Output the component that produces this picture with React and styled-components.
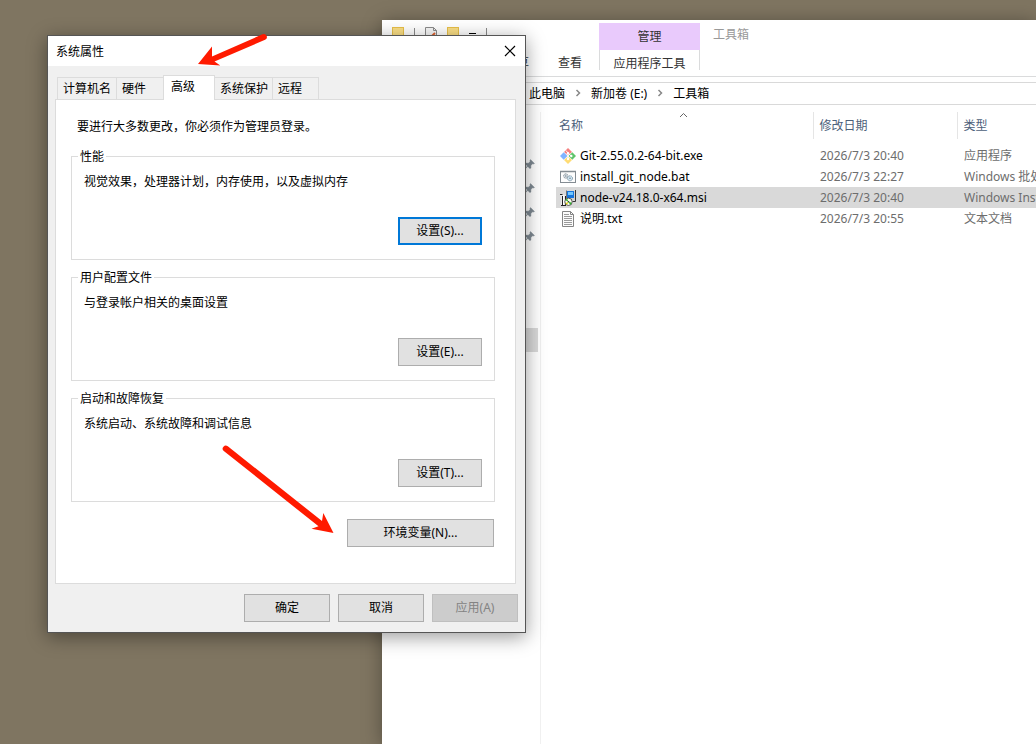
import React, { useState } from 'react';
import styled, { createGlobalStyle, css } from 'styled-components';

const GlobalStyle = createGlobalStyle`
    * {
        box-sizing: border-box;
    }
    body {
        margin: 0;
        overflow: hidden;
    }
    body, button, table {
        font-family: 'Noto Sans', 'Noto Sans CJK SC', sans-serif;
        font-size: 12px;
        line-height: 17px;
        color: #000;
    }
`;

const Desktop = styled.div`
    position: relative;
    height: 100vh;
    overflow: hidden;
    background: #7f7561;
`;

/* ---------- explorer ---------- */

const Explorer = styled.section`
    position: absolute;
    top: 20px;
    left: 382px;
    right: 0;
    bottom: 0;
    display: flex;
    flex-direction: column;
    background: #fff;
    box-shadow: 0 2px 18px rgba(0, 0, 0, 0.35);
`;

const Ribbon = styled.header`
    display: grid;
    grid-template-columns: 217px 101px 1fr;
    grid-template-rows: 30px 26px;
    border-bottom: 1px solid #dadbdc;
`;

const QuickAccess = styled.div`
    display: flex;
    align-items: center;
    gap: 10px;
    padding: 0 0 0 10px;
`;

const QuickDivider = styled.span`
    width: 1px;
    height: 14px;
    background: #8a8a8a;
`;

const ContextTitle = styled.div`
    margin-top: 3px;
    padding-top: 5px;
    background: #e9cafc;
    color: #333;
    text-align: center;
`;

const WindowTitle = styled.div`
    padding: 6px 13px;
    color: #999;
`;

const RibbonTabs = styled.nav`
    display: flex;
    justify-content: flex-end;
    align-items: center;
    gap: 29px;
    padding: 0 17px 2px 0;
`;

const RibbonTab = styled.button`
    padding: 0;
    border: 0;
    background: none;
    color: #333;
`;

const ContextTab = styled(RibbonTab)`
    height: 20px;
    padding-top: 5px;
    border: solid #dadbdc;
    border-width: 0 1px;
`;

const AddressBar = styled.nav`
    display: flex;
    align-items: center;
    gap: 10px;
    height: 23px;
    margin: 5px 0 0 90px;
    padding: 0 0 1px 56px;
    border: 1px solid #d9d9d9;
    border-right: 0;
`;

const Crumb = styled.a`
    color: #000;
    text-decoration: none;
    white-space: nowrap;
`;

const ExplorerBody = styled.div`
    display: grid;
    grid-template-columns: 159px 1fr;
    flex: 1;
    min-height: 0;
    margin-top: 7px;
`;

const NavPane = styled.aside`
    display: flex;
    flex-direction: column;
    padding: 40px 2px 0 0;
    border-right: 1px solid #f0f0f0;
`;

const NavRow = styled.div`
    display: flex;
    align-items: center;
    justify-content: flex-end;
    height: 24px;
    padding-right: 3px;
    background: ${(props) => (props.$selected ? '#d9d9d9' : 'transparent')};
`;

const NavSpace = styled.div`
    height: 80px;
`;

const FileArea = styled.main`
    min-width: 0;
    overflow: hidden;
    padding-left: 15px;
`;

const FileTable = styled.table`
    width: 100%;
    table-layout: fixed;
    border-collapse: collapse;
    white-space: nowrap;

    tbody::before {
        content: '';
        display: block;
        height: 6px;
    }
`;

const HeadCell = styled.th`
    position: relative;
    width: ${(props) => props.$width};
    height: 27px;
    padding: 0 0 0 ${(props) => (props.$first ? '3px' : '6px')};
    border-left: ${(props) => (props.$first ? '0' : '1px solid #e5e5e5')};
    color: #4c607a;
    font-weight: 400;
    text-align: left;
`;

const SortMark = styled.svg`
    position: absolute;
    top: 0;
    left: calc(50% - 5px);
`;

const FileRow = styled.tr`
    height: 21px;
    background: ${(props) => (props.$selected ? '#d9d9d9' : 'transparent')};
`;

const Cell = styled.td`
    padding: 0 0 0 7px;
    color: #6d6d6d;
`;

const NameCell = styled(Cell)`
    padding-left: 4px;
    color: #000;
`;

const FileName = styled.span`
    display: flex;
    align-items: center;
    gap: 4px;
`;

/* ---------- dialog ---------- */

const Dialog = styled.section`
    position: absolute;
    top: 35px;
    left: 47px;
    width: 479px;
    border: 1px solid #555;
    background: #f0f0f0;
    box-shadow: 0 4px 18px rgba(0, 0, 0, 0.4);
`;

const TitleBar = styled.header`
    display: flex;
    align-items: center;
    justify-content: space-between;
    height: 30px;
    padding: 0 4px 0 8px;
    background: #fff;
`;

const Title = styled.h1`
    margin: 0;
    font-size: 12px;
    font-weight: 400;
`;

const CloseButton = styled.button`
    display: flex;
    padding: 5px;
    border: 0;
    background: none;
`;

const DialogBody = styled.div`
    padding: 9px 9px 0 7px;
`;

const TabStrip = styled.div`
    display: flex;
    align-items: flex-end;
    padding-left: 2px;
`;

const Tab = styled.button`
    width: ${(props) => props.$width}px;
    height: 22px;
    margin-right: -1px;
    padding: 0 0 0 5px;
    border: 1px solid #dcdcdc;
    border-bottom: 0;
    background: #f0f0f0;
    text-align: left;
    white-space: nowrap;

    ${(props) =>
        props.$active &&
        css`
            z-index: 1;
            height: 25px;
            margin-bottom: -1px;
            padding: 0 0 3px 7px;
            background: #fff;
        `}
`;

const Panel = styled.div`
    display: flex;
    flex-direction: column;
    padding: 18px 20px 36px 15px;
    border: 1px solid #dcdcdc;
    background: #fff;
`;

const Notice = styled.p`
    margin: 0 0 13px;
    padding-left: 6px;
`;

const Groups = styled.div`
    display: flex;
    flex-direction: column;
    gap: 9px;
    margin-bottom: 17px;
`;

const Group = styled.fieldset`
    min-width: 0;
    margin: 0;
    padding: 8px 12px 14px;
    border: 1px solid #dcdcdc;
`;

const Legend = styled.legend`
    margin-left: -6px;
    padding: 0 2px;
`;

const GroupText = styled.p`
    margin: 0 0 27px;
`;

const Button = styled.button`
    display: block;
    width: ${(props) => props.$width || 86}px;
    height: 28px;
    padding: 0 0 2px;
    border: 1px solid #adadad;
    background: #e1e1e1;

    ${(props) =>
        props.$primary &&
        css`
            border: 2px solid #0078d7;
        `}

    &:disabled {
        border-color: #bfbfbf;
        background: #ccc;
        color: #838383;
    }
`;

const GroupButton = styled(Button)`
    margin-left: auto;
`;

const PanelButton = styled(Button)`
    align-self: flex-end;
    margin-right: 1px;
`;

const Footer = styled.footer`
    display: flex;
    justify-content: flex-end;
    gap: 8px;
    padding: 10px 7px;
`;

const Arrows = styled.svg`
    position: absolute;
    inset: 0;
    width: 100%;
    height: 100%;
    pointer-events: none;
`;

/* ---------- icons ---------- */

const FolderIcon = () => (
    <svg width="12" height="16" viewBox="0 0 12 16">
        <rect x="0.5" y="0.5" width="11" height="15" fill="#fbdf86" stroke="#e8c04a" />
    </svg>
);

const DocIcon = () => (
    <svg width="12" height="16" viewBox="0 0 12 16">
        <path d="M.5 .5h8l3 3v12H.5z" fill="#f7f7f7" stroke="#8b8b8b" />
        <path d="M8.500 .5v3h3" fill="none" stroke="#8b8b8b" />
        <path d="M5 11l5-5" stroke="#e0602c" strokeWidth="2" />
    </svg>
);

const ChevronIcon = () => (
    <svg width="6" height="8" viewBox="0 0 6 8">
        <path d="M1.500 1l3 3-3 3" fill="none" stroke="#888" strokeWidth="1.500" />
    </svg>
);

const PinIcon = () => (
    <svg width="11" height="11" viewBox="0 0 11 11">
        <path d="M6.500 .5l4 4-1.200 .6-.8-.3-1.700 1.900.2 2.100-1 .9L3.800 7.500.5 10.500l-.2-.3L3.300 7 1.200 5l.9-1 2.200.2L6.200 2.500l-.3-.8z" fill="#7f8a93" stroke="#7f8a93" strokeWidth=".4" />
    </svg>
);

const GitIcon = () => (
    <svg width="16" height="16" viewBox="0 0 16 16">
        <path d="M8 0l4 4-4 3.600L4 4z" fill="#f58080" />
        <path d="M3.700 4.300L7.500 8l-3.800 3.700L0 8z" fill="#80b3ff" />
        <path d="M12.300 4.300L16 8l-3.700 3.700L8.500 8z" fill="#5fc46a" />
        <path d="M8 8.400l4 3.600-4 4-4-4z" fill="#ffdc73" />
        <path d="M6 2.500L8 5v6M8 5l3.200 3" fill="none" stroke="#fff" />
        <circle cx="8" cy="5.200" r="1.200" fill="#fff" />
        <circle cx="8" cy="11" r="1.200" fill="#fff" />
        <circle cx="11.300" cy="8" r="1.200" fill="#fff" />
    </svg>
);

const BatIcon = () => (
    <svg width="16" height="16" viewBox="0 0 16 16">
        <rect x="0.500" y="2.500" width="15" height="11" fill="#fdfdfd" stroke="#848c93" />
        <path d="M0 2.500h16" stroke="#848c93" strokeWidth="1.500" />
        <circle cx="5.800" cy="7" r="2.200" fill="#d9e1e7" stroke="#8d979f" strokeDasharray="1.500 .5" />
        <circle cx="10" cy="9.300" r="2.500" fill="#d4eaf6" stroke="#8499a8" strokeDasharray="1.500 .5" />
        <circle cx="5.800" cy="7" r=".7" fill="#75818a" />
        <circle cx="10" cy="9.300" r=".8" fill="#75818a" />
    </svg>
);

const MsiIcon = () => (
    <svg width="16" height="16" viewBox="0 0 16 16">
        <path d="M0 4h3l1 1h3v11H1V6H0z" fill="#e8e8e8" />
        <path d="M0 4.500h2.500M2.500 6v9M5.500 6v9M1 15.500h5" fill="none" stroke="#222" />
        <path d="M3.500 5v10" stroke="#fff" />
        <path d="M6 1h9v9H6z" fill="#cfcfcf" />
        <path d="M7 1h7v7H7z" fill="#1674dc" />
        <path d="M8 2h5v3H8z" fill="#72c7ff" />
        <path d="M15.500 0v11.500h-3" fill="none" stroke="#333" />
        <path d="M6.500 .5V8" stroke="#777" />
        <circle cx="8.500" cy="11.800" r="3.700" fill="#f8f8ec" stroke="#333" strokeWidth=".8" />
        <path d="M8.500 11.800l-3-1.500 1.500-1.800zM8.500 11.800l3.200 1-1.500 2.200z" fill="#2bb62b" />
        <path d="M8.500 11.800l-3 1.500 1.500 1.500z" fill="#e5d400" />
        <circle cx="8.500" cy="11.800" r=".8" fill="#333" />
    </svg>
);

const TextIcon = () => (
    <svg width="16" height="16" viewBox="0 0 16 16">
        <path d="M2.500 .5h8l3 3v12h-11z" fill="#fcfcfc" stroke="#858585" />
        <path d="M10.500 .5v3h3" fill="none" stroke="#858585" />
        <path d="M4 3.500h5M4 5.500h8M4 7.500h8M4 9.500h8M4 11.500h8M4 13.500h8" stroke="#9b9b9b" />
    </svg>
);

/* ---------- data ---------- */

const files = [
    { name: 'Git-2.55.0.2-64-bit.exe', date: '2026/7/3 20:40', type: '应用程序', icon: <GitIcon /> },
    { name: 'install_git_node.bat', date: '2026/7/3 22:27', type: 'Windows 批处理文件', icon: <BatIcon /> },
    { name: 'node-v24.18.0-x64.msi', date: '2026/7/3 20:40', type: 'Windows Installer 程序包', icon: <MsiIcon /> },
    { name: '说明.txt', date: '2026/7/3 20:55', type: '文本文档', icon: <TextIcon /> },
];

const tabs = [
    { label: '计算机名', width: 60 },
    { label: '硬件', width: 48 },
    { label: '高级', width: 52 },
    { label: '系统保护', width: 59 },
    { label: '远程', width: 47 },
];

const groups = [
    { title: '性能', text: '视觉效果，处理器计划，内存使用，以及虚拟内存', button: '设置(S)...', primary: true },
    { title: '用户配置文件', text: '与登录帐户相关的桌面设置', button: '设置(E)...' },
    { title: '启动和故障恢复', text: '系统启动、系统故障和调试信息', button: '设置(T)...' },
];

const ExplorerWindow = () => {
    const [selected, setSelected] = useState(2);

    return (
        <Explorer>
            <Ribbon>
                <QuickAccess>
                    <FolderIcon />
                    <QuickDivider />
                    <DocIcon />
                    <FolderIcon />
                    <svg width="7" height="8" viewBox="0 0 7 8">
                        <path d="M0 2.500h7" stroke="#000" />
                        <path d="M1 5h5L3.500 8z" fill="#333" />
                    </svg>
                    <QuickDivider />
                </QuickAccess>
                <ContextTitle>管理</ContextTitle>
                <WindowTitle>工具箱</WindowTitle>
                <RibbonTabs>
                    <RibbonTab>共享</RibbonTab>
                    <RibbonTab>查看</RibbonTab>
                </RibbonTabs>
                <ContextTab>应用程序工具</ContextTab>
            </Ribbon>
            <AddressBar>
                <Crumb href="#pc">此电脑</Crumb>
                <ChevronIcon />
                <Crumb href="#e">新加卷 (E:)</Crumb>
                <ChevronIcon />
                <Crumb href="#tools">工具箱</Crumb>
            </AddressBar>
            <ExplorerBody>
                <NavPane>
                    {[0, 1, 2, 3].map((item) => (
                        <NavRow key={item}>
                            <PinIcon />
                        </NavRow>
                    ))}
                    <NavSpace />
                    <NavRow $selected />
                </NavPane>
                <FileArea>
                    <FileTable>
                        <thead>
                            <tr>
                                <HeadCell $first $width="257px">
                                    名称
                                    <SortMark width="9" height="6" viewBox="0 0 9 6">
                                        <path d="M1 5l3.500-3.500L8 5" fill="none" stroke="#666" />
                                    </SortMark>
                                </HeadCell>
                                <HeadCell $width="144px">修改日期</HeadCell>
                                <HeadCell $width="auto">类型</HeadCell>
                            </tr>
                        </thead>
                        <tbody>
                            {files.map((file, index) => (
                                <FileRow key={file.name} $selected={index === selected} onClick={() => setSelected(index)}>
                                    <NameCell>
                                        <FileName>
                                            {file.icon}
                                            {file.name}
                                        </FileName>
                                    </NameCell>
                                    <Cell>{file.date}</Cell>
                                    <Cell>{file.type}</Cell>
                                </FileRow>
                            ))}
                        </tbody>
                    </FileTable>
                </FileArea>
            </ExplorerBody>
        </Explorer>
    );
};

const PropertiesDialog = () => {
    const [active, setActive] = useState(2);

    return (
        <Dialog role="dialog" aria-labelledby="dialog-title">
            <TitleBar>
                <Title id="dialog-title">系统属性</Title>
                <CloseButton aria-label="关闭">
                    <svg width="12" height="12" viewBox="0 0 12 12">
                        <path d="M1 1l10 10M11 1L1 11" stroke="#000" strokeWidth="1.200" />
                    </svg>
                </CloseButton>
            </TitleBar>
            <DialogBody>
                <TabStrip role="tablist">
                    {tabs.map((tab, index) => (
                        <Tab
                            key={tab.label}
                            role="tab"
                            aria-selected={index === active}
                            $width={tab.width}
                            $active={index === active}
                            onClick={() => setActive(index)}
                        >
                            {tab.label}
                        </Tab>
                    ))}
                </TabStrip>
                <Panel role="tabpanel">
                    <Notice>要进行大多数更改，你必须作为管理员登录。</Notice>
                    <Groups>
                        {groups.map((group) => (
                            <Group key={group.title}>
                                <Legend>{group.title}</Legend>
                                <GroupText>{group.text}</GroupText>
                                <GroupButton $width={84} $primary={group.primary}>
                                    {group.button}
                                </GroupButton>
                            </Group>
                        ))}
                    </Groups>
                    <PanelButton $width={147}>环境变量(N)...</PanelButton>
                </Panel>
            </DialogBody>
            <Footer>
                <Button>确定</Button>
                <Button>取消</Button>
                <Button disabled>应用(A)</Button>
            </Footer>
        </Dialog>
    );
};

const App = () => (
    <Desktop>
        <GlobalStyle />
        <ExplorerWindow />
        <PropertiesDialog />
        <Arrows aria-hidden="true">
            <g fill="#ff1a00">
                <path d="M262.500 34.300a3 3 0 0 1 2.600 5.500L214.500 61.500l5.800 4L198 64l14-17.500v10z" />
                <path d="M223.800 451a3 3 0 0 1 4-4.700L322 521l1.300-8 10.200 20-22-4.200 7-2.500z" />
            </g>
        </Arrows>
    </Desktop>
);

export default App;
